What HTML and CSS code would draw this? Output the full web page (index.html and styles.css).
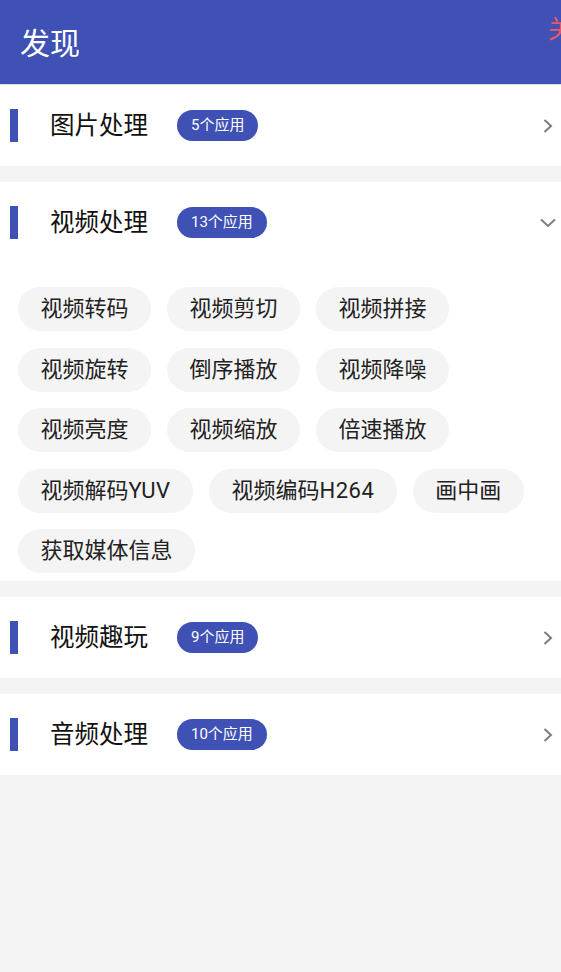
FILE: index.html
```html
<!doctype html>
<html lang="zh-CN">
<head>
<meta charset="utf-8">
<title>发现</title>
<link rel="stylesheet" href="styles.css">
</head>
<body>
<div class="appbar">
  <div class="appbar-title">发现</div>
  <div class="appbar-action">关于</div>
</div>

<div class="group">
  <div class="group-head">
    <span class="bar"></span>
    <span class="title">图片处理</span>
    <span class="badge">5个应用</span>
    <svg class="arrow" width="10" height="14" viewBox="0 0 10 14"><polyline points="1.5,1 8,7 1.5,13" fill="none" stroke="#7d7d7d" stroke-width="2"/></svg>
  </div>
</div>

<div class="group">
  <div class="group-head">
    <span class="bar"></span>
    <span class="title">视频处理</span>
    <span class="badge">13个应用</span>
    <svg class="arrow arrow-down" width="16" height="10" viewBox="0 0 16 10"><polyline points="1,1.5 8,8 15,1.5" fill="none" stroke="#7d7d7d" stroke-width="2"/></svg>
  </div>
  <div class="chips">
    <span class="chip">视频转码</span>
    <span class="chip">视频剪切</span>
    <span class="chip">视频拼接</span>
    <span class="chip">视频旋转</span>
    <span class="chip">倒序播放</span>
    <span class="chip">视频降噪</span>
    <span class="chip">视频亮度</span>
    <span class="chip">视频缩放</span>
    <span class="chip">倍速播放</span>
    <span class="chip">视频解码<span class="latin">YUV</span></span>
    <span class="chip">视频编码<span class="latin">H264</span></span>
    <span class="chip">画中画</span>
    <span class="chip">获取媒体信息</span>
  </div>
</div>

<div class="group">
  <div class="group-head">
    <span class="bar"></span>
    <span class="title">视频趣玩</span>
    <span class="badge">9个应用</span>
    <svg class="arrow" width="10" height="14" viewBox="0 0 10 14"><polyline points="1.5,1 8,7 1.5,13" fill="none" stroke="#7d7d7d" stroke-width="2"/></svg>
  </div>
</div>

<div class="group">
  <div class="group-head">
    <span class="bar"></span>
    <span class="title">音频处理</span>
    <span class="badge">10个应用</span>
    <svg class="arrow" width="10" height="14" viewBox="0 0 10 14"><polyline points="1.5,1 8,7 1.5,13" fill="none" stroke="#7d7d7d" stroke-width="2"/></svg>
  </div>
</div>
</body>
</html>
```

FILE: styles.css
```css
body {
	margin: 0;
	background: #f4f4f4;
	font-family: Roboto, "Noto Sans CJK SC", sans-serif;
	color: #111;
}
.appbar {
	height: 84px;
	background: #3f51b5;
	display: flex;
	align-items: center;
	overflow: hidden;
	box-shadow: 0 1px 2px rgba(0,0,0,0.12);
	margin-bottom: 1px;
}
.appbar-title {
	flex-shrink: 0;
	width: 528px;
	padding-left: 20px;
	font-size: 30px;
	line-height: 30px;
	color: #fff;
	margin-top: 4px;
}
.appbar-action {
	flex-shrink: 0;
	align-self: flex-start;
	margin-top: 16px;
	font-size: 25px;
	line-height: 28px;
	color: #e8566c;
	white-space: nowrap;
}
.group {
	background: #fff;
	margin-bottom: 16px;
}
.group-head {
	height: 81px;
	display: flex;
	align-items: center;
	padding-left: 10px;
}
.bar {
	width: 8px;
	height: 33px;
	background: #3f51b5;
}
.title {
	margin-left: 32px;
	font-size: 24.5px;
	line-height: 30px;
	color: #111;
}
.badge {
	margin-left: 29px;
	height: 31px;
	line-height: 31px;
	padding: 0 14px;
	border-radius: 16px;
	background: #3f51b5;
	color: #fff;
	font-size: 15px;
}
.arrow {
	margin-left: auto;
	margin-right: 8px;
}
.arrow-down {
	margin-right: 5px;
}
.chips {
	display: flex;
	flex-wrap: wrap;
	gap: 16.5px 16px;
	padding: 24px 18px 8px;
}
.chip {
	height: 44px;
	line-height: 44px;
	padding: 0 22.5px;
	border-radius: 22px;
	background: #f4f4f4;
	font-size: 22px;
	color: #222;
}
.latin {
	letter-spacing: 0.5px;
}
```
